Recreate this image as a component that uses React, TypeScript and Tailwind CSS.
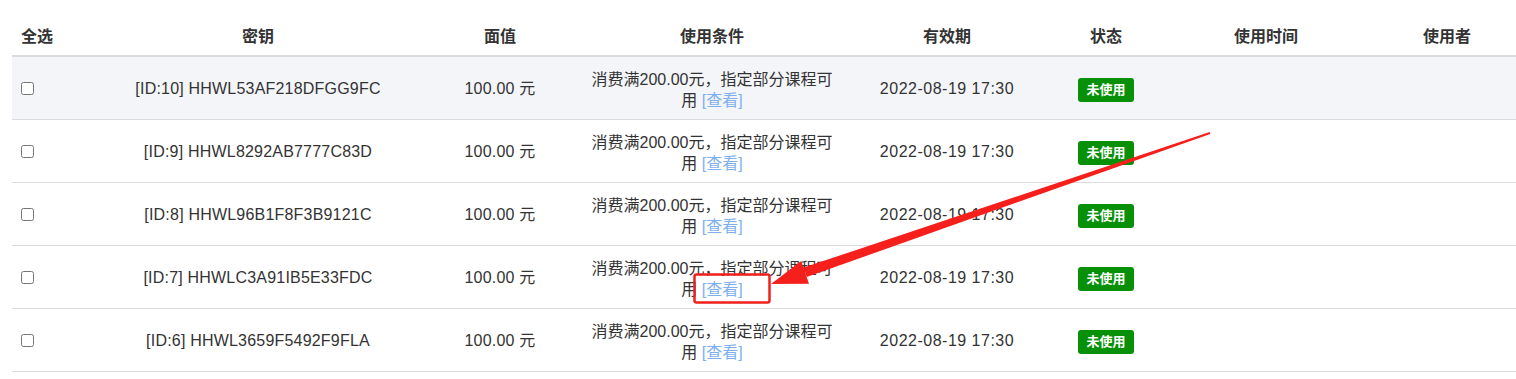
import React from 'react';

type Coupon = {
  id: number;
  code: string;
};

const coupons: Coupon[] = [
  { id: 10, code: 'HHWL53AF218DFGG9FC' },
  { id: 9, code: 'HHWL8292AB7777C83D' },
  { id: 8, code: 'HHWL96B1F8F3B9121C' },
  { id: 7, code: 'HHWLC3A91IB5E33FDC' },
  { id: 6, code: 'HHWL3659F5492F9FLA' },
];

const columns = [
  { label: '全选', w: 'w-[92px]', align: 'text-left pl-[9px]' },
  { label: '密钥', w: 'w-[308px]', align: 'text-center' },
  { label: '面值', w: 'w-[176px]', align: 'text-center' },
  { label: '使用条件', w: 'w-[248px]', align: 'text-center' },
  { label: '有效期', w: 'w-[222px]', align: 'text-center' },
  { label: '状态', w: 'w-[96px]', align: 'text-center' },
  { label: '使用时间', w: 'w-[224px]', align: 'text-center' },
  { label: '使用者', w: 'w-[138px]', align: 'text-center' },
];

function Annotation() {
  return (
    <svg
      className="absolute left-0 top-0 pointer-events-none"
      width="1516"
      height="379"
      viewBox="0 0 1516 379"
    >
      {/* tapered shaft */}
      <polygon
        points="1210.3,133.9 1209.7,132.1 803.5,267.6 806.7,277"
        fill="#f5201c"
      />
      {/* arrow head */}
      <polygon points="771,284 801.2,260.9 809,283.7" fill="#f5201c" />
      {/* highlight box */}
      <rect
        x="694.5"
        y="274.5"
        width="75"
        height="28"
        rx="2"
        fill="none"
        stroke="#f0201c"
        strokeWidth="2.5"
      />
    </svg>
  );
}

export default function App() {
  return (
    <div
      className="relative w-[1516px] h-[379px] bg-white pt-4 pl-[12px] overflow-hidden text-[16px] text-[#333]"
      style={{ fontFamily: '"Liberation Sans", "Noto Sans CJK SC", sans-serif' }}
    >
      <table className="table-fixed border-collapse w-[1504px]">
        <thead>
          <tr>
            {columns.map((c) => (
              <th
                key={c.label}
                className={`${c.w} ${c.align} pt-[10px] pb-[8px] leading-[21px] font-bold border-b-2 border-[#dcdcdc]`}
              >
                {c.label}
              </th>
            ))}
          </tr>
        </thead>
        <tbody>
          {coupons.map((c, i) => (
            <tr key={c.id} className={i === 0 ? 'bg-[#f4f5f9]' : 'bg-white'}>
              <td className="pl-[9px] h-[63px] border-b border-[#dcdcdc] align-middle">
                <input type="checkbox" className="m-0 block w-[13px] h-[13px]" />
              </td>
              <td className="text-center pt-[2px] border-b border-[#dcdcdc] tracking-[0.2px]">
                [ID:{c.id}] {c.code}
              </td>
              <td className="text-center pt-[2px] border-b border-[#dcdcdc] tracking-[0.2px]">
                100.00 元
              </td>
              <td className="text-center pt-[12px] pb-[8px] leading-[21px] border-b border-[#dcdcdc]">
                消费满200.00元，指定部分课程可用{' '}
                <a className="text-[#7eb0ee] cursor-pointer">[查看]</a>
              </td>
              <td className="text-center pt-[2px] border-b border-[#dcdcdc] tracking-[0.5px]">
                2022-08-19 17:30
              </td>
              <td className="text-center pt-[2px] border-b border-[#dcdcdc]">
                <span className="inline-block px-[8px] leading-[24px] text-[13px] font-bold text-white bg-[#089108] rounded-[3px]">
                  未使用
                </span>
              </td>
              <td className="border-b border-[#dcdcdc]"></td>
              <td className="border-b border-[#dcdcdc]"></td>
            </tr>
          ))}
        </tbody>
      </table>
      <Annotation />
    </div>
  );
}
